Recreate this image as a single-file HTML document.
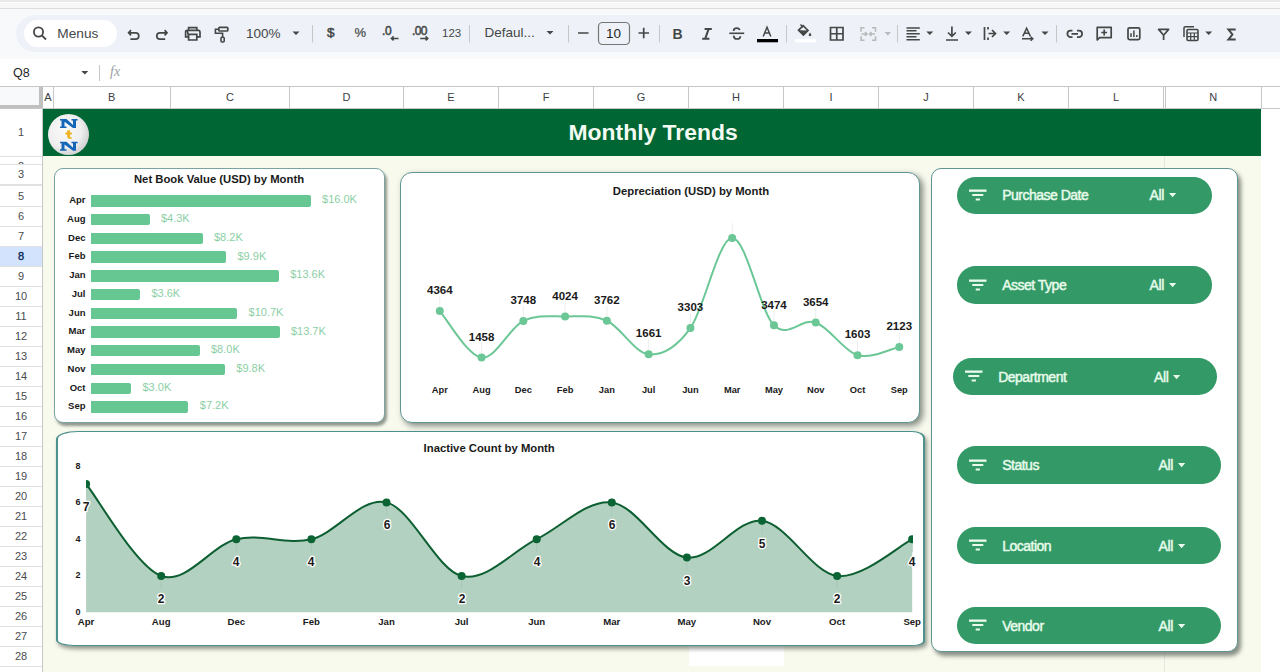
<!DOCTYPE html>
<html><head><meta charset="utf-8"><style>
html,body{margin:0;padding:0;width:1280px;height:672px;overflow:hidden;background:#fff;font-family:"Liberation Sans", sans-serif;}
div{box-sizing:border-box}
</style></head><body>
<div style="position:absolute;left:0px;top:0px;width:1280px;height:2px;background:#e9eae8"></div><div style="position:absolute;left:0px;top:2px;width:1280px;height:1px;background:#fff"></div><div style="position:absolute;left:0px;top:3px;width:1280px;height:5px;background:#f8f7f7"></div><div style="position:absolute;left:0px;top:8px;width:1280px;height:1px;background:#dfdcdc"></div><div style="position:absolute;left:0px;top:9px;width:1280px;height:50px;background:#f7f9fb"></div><div style="position:absolute;left:16px;top:15px;width:1290px;height:37px;border-radius:19px;background:#eef2f8"></div><div style="position:absolute;left:24px;top:20px;width:93px;height:27px;border-radius:14px;background:#fff"></div><div style="position:absolute;left:57.3px;top:25.8px;white-space:nowrap;font-size:13.7px;color:#444746;line-height:15px">Menus</div>
<svg style="position:absolute;left:0;top:0;z-index:5" width="1280" height="90" fill="none" stroke="#444746" stroke-width="1.8">
 <!-- search -->
 <circle cx="38.5" cy="32" r="4.6"/><path d="M41.8 35.3 L46 39.5"/>
 <!-- undo -->
 <path d="M131 30.2 L128.6 32.8 L131 35.4 M128.6 32.8 H135.6 A3.2 3.2 0 0 1 135.6 39.2 H130.4" stroke-width="1.7"/>
 <!-- redo -->
 <path d="M164.6 30.2 L167 32.8 L164.6 35.4 M167 32.8 H160 A3.2 3.2 0 0 0 160 39.2 H165.2" stroke-width="1.7"/>
 <!-- print -->
 <path d="M188.6 30.3 V27.6 H196.8 V30.3 M187.3 30.3 H198.4 A1.6 1.6 0 0 1 200 31.9 V36.8 H196.8 M188.6 36.8 H185.6 V31.9 A1.6 1.6 0 0 1 187.3 30.3 Z M188.6 34.4 H196.8 V40 H188.6 Z" stroke-width="1.7"/>
 <!-- paint format -->
 <rect x="218.8" y="27.4" width="9" height="3.6" rx="0.8" stroke-width="1.7"/><path d="M218.8 29.2 H215.4 V33.3 H222.6 V37" stroke-width="1.6"/><rect x="221" y="37.2" width="3.2" height="4.8" rx="1" stroke-width="1.6"/>
 <!-- dropdown triangles -->
 <path d="M292.5 31.5 H299.5 L296 35 Z M546.5 31 H553.5 L550 34.5 Z M81.3 71 H88.3 L84.8 74.5 Z" fill="#444746" stroke="none"/>
 <!-- separators -->
 <path d="M312.5 25 V42.5 M469.5 25 V42.5 M568.5 25 V42.5 M659.5 25 V42.5 M786.5 25 V42.5 M897.5 25 V42.5 M1056.5 25 V42.5" stroke="#c7c7c7" stroke-width="1"/>
 <path d="M398.6 38.4 H391.6 M393.6 36.4 L391.4 38.4 L393.6 40.4 M420.2 38.4 H427.6 M425.6 36.4 L427.8 38.4 L425.6 40.4" stroke-width="1.5"/>
 <!-- minus plus -->
 <path d="M578 33 H588.5 M638.5 33 H649 M643.7 27.8 V38.2" stroke-width="1.7"/>
 <rect x="598.5" y="22.5" width="31" height="22" rx="4" stroke="#747775" stroke-width="1.2"/>
 <!-- strikethrough -->
 <path d="M729.3 33.3 H744.2" stroke-width="1.6"/><path d="M733.6 31 C733.6 29.2 735 28.2 736.6 28.2 C738.2 28.2 739.4 29 739.6 30.2" stroke-width="1.7"/><path d="M733.6 35.6 C733.8 37.8 735.2 39 737 39 C739 39 740.4 37.8 740.4 36.2" stroke-width="1.7"/>
 <!-- text color A -->
 <path d="M763.2 36.5 L767 27.3 L770.8 36.5 M764.6 33 H769.4" stroke-width="1.5"/>
 <rect x="757" y="39" width="21" height="3.3" fill="#000" stroke="none"/>
 <!-- paint bucket -->
 <path d="M798.6 30.2 L803.2 25.6 L808 30.4 L803.4 35 Z" stroke-width="1.7"/><path d="M798.6 30.2 L808 30.4 L803.4 35 Z" fill="#444746" stroke="none"/><path d="M800.5 24.5 L803.2 27.2" stroke-width="1.5"/><path d="M810 32.6 Q808.2 35 809 35.8 Q810 36.6 811 35.8 Q811.8 35 810 32.6Z" fill="#444746" stroke="none"/>
 <rect x="795" y="39" width="21" height="3.3" fill="#fff" stroke="none"/>
 <!-- borders -->
 <path d="M830.5 27.5 H843 V40 H830.5 Z M836.75 27.5 V40 M830.5 33.75 H843" stroke-width="1.7"/>
 <!-- merge (gray) -->
 <path d="M864.5 27.8 H861 V31.8 M861 36.2 V40.2 H864.5 M872 27.8 H875.5 V31.8 M875.5 36.2 V40.2 H872 M861.5 34 H866.8 M865 32.2 L866.9 34 L865 35.8 M875 34 H869.7 M871.5 32.2 L869.6 34 L871.5 35.8" stroke="#b8b9b9" stroke-width="1.6"/>
 <path d="M884.5 32 H891 L887.75 35.5 Z" fill="#b8b9b9" stroke="none"/>
 <!-- align left -->
 <path d="M906.5 27.9 H919.8 M906.5 30.85 H916.5 M906.5 33.8 H919.8 M906.5 36.75 H916.5 M906.5 39.7 H919.8" stroke-width="1.5"/>
 <!-- valign -->
 <path d="M951.9 26.5 V36 M948 32.5 L951.9 36.3 L955.8 32.5 M946 40 H958" stroke-width="1.7"/>
 <!-- wrap -->
 <path d="M984.5 27 V40 M988.5 33.5 H995 M992 30 L995.5 33.5 L992 37 M988 27 V29.5 M988 37.5 V40" stroke-width="1.7"/>
 <!-- rotate A -->
 <path d="M1022.8 36.4 L1026.6 28.2 L1030.4 36.4 M1024.2 33.2 H1029 M1022 38.8 H1032.8 M1030.6 36.8 L1032.8 38.8 L1030.6 40.8" stroke-width="1.5"/>
 <path d="M926.3 31.5 H933.3 L929.8 35 Z M964.9 31.5 H971.9 L968.4 35 Z M1003.2 31.5 H1010.2 L1006.7 35 Z M1041.5 31.5 H1048.5 L1045 35 Z M1205.2 31.5 H1212.2 L1208.7 35 Z" fill="#444746" stroke="none"/>
 <!-- link -->
 <path d="M1072.5 30.7 H1070.6 A3.2 3.2 0 0 0 1070.6 37.1 H1072.5 M1077 30.7 H1078.9 A3.2 3.2 0 0 1 1078.9 37.1 H1077 M1071.5 33.9 H1078" stroke-width="1.8"/>
 <!-- comment -->
 <path d="M1097.2 27.4 H1111.2 V37.6 H1099.6 L1097.2 40 Z M1104.2 29.6 V35.4 M1101.3 32.5 H1107.1" stroke-width="1.7" stroke-linejoin="round"/>
 <!-- chart -->
 <rect x="1128" y="27.8" width="11.8" height="11.8" rx="1.5" stroke-width="1.7"/><path d="M1131 33.2 V37 M1133.9 30.6 V37 M1136.8 35 V37" stroke-width="1.5"/>
 <!-- filter -->
 <path d="M1158.6 29.4 H1168.6 L1163.6 35.2 Z M1163.6 35 V40" stroke-width="1.7" stroke-linejoin="round"/>
 <!-- functions table -->
 <path d="M1184 37 V28 A1.3 1.3 0 0 1 1185.3 26.7 H1194" stroke-width="1.5"/>
 <rect x="1187" y="29.5" width="11" height="11" rx="1.2" stroke-width="1.6"/>
 <path d="M1187 33 H1198 M1187 36.7 H1198 M1190.7 33 V40.5 M1194.3 33 V40.5" stroke-width="1.2"/>
 <!-- sigma -->
 <path d="M1235.7 29.4 H1228.4 L1232.4 34.5 L1228.4 39.6 H1235.7" stroke-width="2"/>
 <path d="M704.6 29.1 H711.8 M702.2 38.7 H709.4 M708.6 29.1 L705.2 38.7" stroke-width="2"/>
</svg>
<div style="position:absolute;left:246px;top:26px;white-space:nowrap;font-size:13.5px;color:#444746;line-height:15px">100%</div><div style="position:absolute;left:327px;top:25.3px;white-space:nowrap;font-size:13.5px;color:#444746;line-height:15px;-webkit-text-stroke:0.5px #444746">$</div><div style="position:absolute;left:354.6px;top:25.3px;white-space:nowrap;font-size:13px;color:#444746;line-height:15px;-webkit-text-stroke:0.2px #444746">%</div><div style="position:absolute;left:382px;top:23.5px;white-space:nowrap;font-size:12px;color:#444746;line-height:14px;letter-spacing:-0.4px;-webkit-text-stroke:0.5px #444746">.0</div><div style="position:absolute;left:412px;top:23.5px;white-space:nowrap;font-size:12px;color:#444746;line-height:14px;letter-spacing:-0.6px;-webkit-text-stroke:0.5px #444746">.00</div><div style="position:absolute;left:442px;top:27px;white-space:nowrap;font-size:11.5px;color:#444746;line-height:13px">123</div><div style="position:absolute;left:484.5px;top:25px;white-space:nowrap;font-size:13.5px;color:#444746;line-height:15px">Defaul...</div><div style="position:absolute;left:606px;top:26px;white-space:nowrap;font-size:13.5px;color:#1f1f1f;line-height:15px">10</div><div style="position:absolute;left:672.5px;top:26.5px;white-space:nowrap;font-size:14px;font-weight:bold;color:#444746;line-height:15px">B</div><div style="position:absolute;left:0px;top:59px;width:1280px;height:27px;background:#fff"></div><div style="position:absolute;left:13px;top:66.3px;white-space:nowrap;font-size:12.5px;color:#1f1f1f;line-height:14px">Q8</div><div style="position:absolute;left:99px;top:65px;width:1px;height:16px;background:#c7c7c7"></div><div style="position:absolute;left:110px;top:64px;white-space:nowrap;font-size:14px;color:#9aa0a6;font-family:'Liberation Serif',serif;line-height:16px"><i>fx</i></div><div style="position:absolute;left:0px;top:86px;width:1280px;height:1px;background:#c7c7c7"></div><div style="position:absolute;left:0px;top:87px;width:1280px;height:21px;background:#fff"></div><div style="position:absolute;left:0px;top:87px;width:39px;height:18px;background:#f8f9fa"></div><div style="position:absolute;left:39px;top:87px;width:4px;height:22px;background:#c0c0c0"></div><div style="position:absolute;left:0px;top:105px;width:43px;height:4px;background:#c0c0c0"></div><div style="position:absolute;left:43px;top:87px;width:10px;height:21px;line-height:21px;text-align:center;font-size:11px;color:#3c4043">A</div><div style="position:absolute;left:52.5px;top:87px;width:1px;height:21px;background:#c7c7c7"></div><div style="position:absolute;left:53px;top:87px;width:117.5px;height:21px;line-height:21px;text-align:center;font-size:11px;color:#3c4043">B</div><div style="position:absolute;left:170.0px;top:87px;width:1px;height:21px;background:#c7c7c7"></div><div style="position:absolute;left:170.5px;top:87px;width:119.0px;height:21px;line-height:21px;text-align:center;font-size:11px;color:#3c4043">C</div><div style="position:absolute;left:289.0px;top:87px;width:1px;height:21px;background:#c7c7c7"></div><div style="position:absolute;left:289.5px;top:87px;width:114.0px;height:21px;line-height:21px;text-align:center;font-size:11px;color:#3c4043">D</div><div style="position:absolute;left:403.0px;top:87px;width:1px;height:21px;background:#c7c7c7"></div><div style="position:absolute;left:403.5px;top:87px;width:95.0px;height:21px;line-height:21px;text-align:center;font-size:11px;color:#3c4043">E</div><div style="position:absolute;left:498.0px;top:87px;width:1px;height:21px;background:#c7c7c7"></div><div style="position:absolute;left:498.5px;top:87px;width:95.0px;height:21px;line-height:21px;text-align:center;font-size:11px;color:#3c4043">F</div><div style="position:absolute;left:593.0px;top:87px;width:1px;height:21px;background:#c7c7c7"></div><div style="position:absolute;left:593.5px;top:87px;width:95.0px;height:21px;line-height:21px;text-align:center;font-size:11px;color:#3c4043">G</div><div style="position:absolute;left:688.0px;top:87px;width:1px;height:21px;background:#c7c7c7"></div><div style="position:absolute;left:688.5px;top:87px;width:95.0px;height:21px;line-height:21px;text-align:center;font-size:11px;color:#3c4043">H</div><div style="position:absolute;left:783.0px;top:87px;width:1px;height:21px;background:#c7c7c7"></div><div style="position:absolute;left:783.5px;top:87px;width:95.0px;height:21px;line-height:21px;text-align:center;font-size:11px;color:#3c4043">I</div><div style="position:absolute;left:878.0px;top:87px;width:1px;height:21px;background:#c7c7c7"></div><div style="position:absolute;left:878.5px;top:87px;width:95.0px;height:21px;line-height:21px;text-align:center;font-size:11px;color:#3c4043">J</div><div style="position:absolute;left:973.0px;top:87px;width:1px;height:21px;background:#c7c7c7"></div><div style="position:absolute;left:973.5px;top:87px;width:95.0px;height:21px;line-height:21px;text-align:center;font-size:11px;color:#3c4043">K</div><div style="position:absolute;left:1068.0px;top:87px;width:1px;height:21px;background:#c7c7c7"></div><div style="position:absolute;left:1068.5px;top:87px;width:95.0px;height:21px;line-height:21px;text-align:center;font-size:11px;color:#3c4043">L</div><div style="position:absolute;left:1163.0px;top:87px;width:1px;height:21px;background:#c7c7c7"></div><div style="position:absolute;left:1165.5px;top:87px;width:95.5px;height:21px;line-height:21px;text-align:center;font-size:11px;color:#3c4043">N</div><div style="position:absolute;left:1260.5px;top:87px;width:1px;height:21px;background:#c7c7c7"></div><div style="position:absolute;left:1165px;top:87px;width:1px;height:21px;background:#c7c7c7"></div><div style="position:absolute;left:0px;top:108px;width:1280px;height:1px;background:#c7c7c7"></div><div style="position:absolute;left:0px;top:109px;width:43px;height:563px;background:#fff"></div><div style="position:absolute;left:42px;top:109px;width:1px;height:563px;background:#c7c7c7"></div><div style="position:absolute;left:0;top:109px;width:42px;height:47px;overflow:hidden;background:#fff;line-height:47px;text-align:center;font-size:11px;color:#4a4d50;font-weight:normal">1</div><div style="position:absolute;left:0;top:156px;width:42px;height:8px;overflow:hidden;background:#fff;line-height:20px;text-align:center;font-size:11px;color:#4a4d50;font-weight:normal">2</div><div style="position:absolute;left:0;top:164px;width:42px;height:20.5px;overflow:hidden;background:#fff;line-height:20.5px;text-align:center;font-size:11px;color:#4a4d50;font-weight:normal">3</div><div style="position:absolute;left:0;top:186px;width:42px;height:20px;overflow:hidden;background:#fff;line-height:20px;text-align:center;font-size:11px;color:#4a4d50;font-weight:normal">5</div><div style="position:absolute;left:0;top:206px;width:42px;height:20px;overflow:hidden;background:#fff;line-height:20px;text-align:center;font-size:11px;color:#4a4d50;font-weight:normal">6</div><div style="position:absolute;left:0;top:226px;width:42px;height:20px;overflow:hidden;background:#fff;line-height:20px;text-align:center;font-size:11px;color:#4a4d50;font-weight:normal">7</div><div style="position:absolute;left:0;top:246px;width:42px;height:20px;overflow:hidden;background:#d3e3fd;line-height:20px;text-align:center;font-size:11px;color:#0e2c5c;font-weight:normal;-webkit-text-stroke:0.4px #0e2c5c">8</div><div style="position:absolute;left:0;top:266px;width:42px;height:20px;overflow:hidden;background:#fff;line-height:20px;text-align:center;font-size:11px;color:#4a4d50;font-weight:normal">9</div><div style="position:absolute;left:0;top:286px;width:42px;height:20px;overflow:hidden;background:#fff;line-height:20px;text-align:center;font-size:11px;color:#4a4d50;font-weight:normal">10</div><div style="position:absolute;left:0;top:306px;width:42px;height:20px;overflow:hidden;background:#fff;line-height:20px;text-align:center;font-size:11px;color:#4a4d50;font-weight:normal">11</div><div style="position:absolute;left:0;top:326px;width:42px;height:20px;overflow:hidden;background:#fff;line-height:20px;text-align:center;font-size:11px;color:#4a4d50;font-weight:normal">12</div><div style="position:absolute;left:0;top:346px;width:42px;height:20px;overflow:hidden;background:#fff;line-height:20px;text-align:center;font-size:11px;color:#4a4d50;font-weight:normal">13</div><div style="position:absolute;left:0;top:366px;width:42px;height:20px;overflow:hidden;background:#fff;line-height:20px;text-align:center;font-size:11px;color:#4a4d50;font-weight:normal">14</div><div style="position:absolute;left:0;top:386px;width:42px;height:20px;overflow:hidden;background:#fff;line-height:20px;text-align:center;font-size:11px;color:#4a4d50;font-weight:normal">15</div><div style="position:absolute;left:0;top:406px;width:42px;height:20px;overflow:hidden;background:#fff;line-height:20px;text-align:center;font-size:11px;color:#4a4d50;font-weight:normal">16</div><div style="position:absolute;left:0;top:426px;width:42px;height:20px;overflow:hidden;background:#fff;line-height:20px;text-align:center;font-size:11px;color:#4a4d50;font-weight:normal">17</div><div style="position:absolute;left:0;top:446px;width:42px;height:20px;overflow:hidden;background:#fff;line-height:20px;text-align:center;font-size:11px;color:#4a4d50;font-weight:normal">18</div><div style="position:absolute;left:0;top:466px;width:42px;height:20px;overflow:hidden;background:#fff;line-height:20px;text-align:center;font-size:11px;color:#4a4d50;font-weight:normal">19</div><div style="position:absolute;left:0;top:486px;width:42px;height:20px;overflow:hidden;background:#fff;line-height:20px;text-align:center;font-size:11px;color:#4a4d50;font-weight:normal">20</div><div style="position:absolute;left:0;top:506px;width:42px;height:20px;overflow:hidden;background:#fff;line-height:20px;text-align:center;font-size:11px;color:#4a4d50;font-weight:normal">21</div><div style="position:absolute;left:0;top:526px;width:42px;height:20px;overflow:hidden;background:#fff;line-height:20px;text-align:center;font-size:11px;color:#4a4d50;font-weight:normal">22</div><div style="position:absolute;left:0;top:546px;width:42px;height:20px;overflow:hidden;background:#fff;line-height:20px;text-align:center;font-size:11px;color:#4a4d50;font-weight:normal">23</div><div style="position:absolute;left:0;top:566px;width:42px;height:20px;overflow:hidden;background:#fff;line-height:20px;text-align:center;font-size:11px;color:#4a4d50;font-weight:normal">24</div><div style="position:absolute;left:0;top:586px;width:42px;height:20px;overflow:hidden;background:#fff;line-height:20px;text-align:center;font-size:11px;color:#4a4d50;font-weight:normal">25</div><div style="position:absolute;left:0;top:606px;width:42px;height:20px;overflow:hidden;background:#fff;line-height:20px;text-align:center;font-size:11px;color:#4a4d50;font-weight:normal">26</div><div style="position:absolute;left:0;top:626px;width:42px;height:20px;overflow:hidden;background:#fff;line-height:20px;text-align:center;font-size:11px;color:#4a4d50;font-weight:normal">27</div><div style="position:absolute;left:0;top:646px;width:42px;height:20px;overflow:hidden;background:#fff;line-height:20px;text-align:center;font-size:11px;color:#4a4d50;font-weight:normal">28</div><div style="position:absolute;left:0;top:666px;width:42px;height:20px;overflow:hidden;background:#fff;line-height:20px;text-align:center;font-size:11px;color:#4a4d50;font-weight:normal">29</div><div style="position:absolute;left:0px;top:155.5px;width:42px;height:1px;background:#e1e1e1"></div><div style="position:absolute;left:0px;top:163.5px;width:42px;height:1px;background:#e1e1e1"></div><div style="position:absolute;left:0px;top:184.0px;width:42px;height:1px;background:#e1e1e1"></div><div style="position:absolute;left:0px;top:205.5px;width:42px;height:1px;background:#e1e1e1"></div><div style="position:absolute;left:0px;top:225.5px;width:42px;height:1px;background:#e1e1e1"></div><div style="position:absolute;left:0px;top:245.5px;width:42px;height:1px;background:#e1e1e1"></div><div style="position:absolute;left:0px;top:265.5px;width:42px;height:1px;background:#e1e1e1"></div><div style="position:absolute;left:0px;top:285.5px;width:42px;height:1px;background:#e1e1e1"></div><div style="position:absolute;left:0px;top:305.5px;width:42px;height:1px;background:#e1e1e1"></div><div style="position:absolute;left:0px;top:325.5px;width:42px;height:1px;background:#e1e1e1"></div><div style="position:absolute;left:0px;top:345.5px;width:42px;height:1px;background:#e1e1e1"></div><div style="position:absolute;left:0px;top:365.5px;width:42px;height:1px;background:#e1e1e1"></div><div style="position:absolute;left:0px;top:385.5px;width:42px;height:1px;background:#e1e1e1"></div><div style="position:absolute;left:0px;top:405.5px;width:42px;height:1px;background:#e1e1e1"></div><div style="position:absolute;left:0px;top:425.5px;width:42px;height:1px;background:#e1e1e1"></div><div style="position:absolute;left:0px;top:445.5px;width:42px;height:1px;background:#e1e1e1"></div><div style="position:absolute;left:0px;top:465.5px;width:42px;height:1px;background:#e1e1e1"></div><div style="position:absolute;left:0px;top:485.5px;width:42px;height:1px;background:#e1e1e1"></div><div style="position:absolute;left:0px;top:505.5px;width:42px;height:1px;background:#e1e1e1"></div><div style="position:absolute;left:0px;top:525.5px;width:42px;height:1px;background:#e1e1e1"></div><div style="position:absolute;left:0px;top:545.5px;width:42px;height:1px;background:#e1e1e1"></div><div style="position:absolute;left:0px;top:565.5px;width:42px;height:1px;background:#e1e1e1"></div><div style="position:absolute;left:0px;top:585.5px;width:42px;height:1px;background:#e1e1e1"></div><div style="position:absolute;left:0px;top:605.5px;width:42px;height:1px;background:#e1e1e1"></div><div style="position:absolute;left:0px;top:625.5px;width:42px;height:1px;background:#e1e1e1"></div><div style="position:absolute;left:0px;top:645.5px;width:42px;height:1px;background:#e1e1e1"></div><div style="position:absolute;left:0px;top:665.5px;width:42px;height:1px;background:#e1e1e1"></div><div style="position:absolute;left:0px;top:685.5px;width:42px;height:1px;background:#e1e1e1"></div><div style="position:absolute;left:0px;top:184.5px;width:42px;height:1.5px;background:#e1e1e1"></div><div style="position:absolute;left:43px;top:109px;width:1218px;height:563px;background:#f8faee"></div><div style="position:absolute;left:1261px;top:109px;width:19px;height:563px;background:#fff"></div><div style="position:absolute;left:43px;top:109px;width:1218px;height:47px;background:#006633"></div><div style="position:absolute;left:688.5px;top:646px;width:95px;height:20px;background:#fff"></div><div style="position:absolute;left:1163.5px;top:156px;width:1px;height:563px;background:#e6e8df"></div><svg style="position:absolute;left:47px;top:113px" width="44" height="44">
<defs><radialGradient id="lg" cx="40%" cy="40%" r="60%"><stop offset="0" stop-color="#fafafa"/><stop offset="0.7" stop-color="#eeeeee"/><stop offset="1" stop-color="#d5d5d5"/></radialGradient></defs>
<circle cx="21.5" cy="21.5" r="20.5" fill="url(#lg)"/>
<path d="M13.00 6.00 L19.50 6.00 L26.00 12.00 L26.00 7.50 L24.50 7.50 L24.50 6.00 L30.60 6.00 L30.60 7.50 L29.00 7.50 L29.00 15.00 L26.00 15.00 L17.50 8.80 L17.50 13.50 L19.50 13.50 L19.50 15.00 L13.00 15.00 L13.00 13.50 L14.50 13.50 L14.50 7.50 L13.00 7.50 Z" fill="#1565b8"/><path d="M13.00 28.80 L19.50 28.80 L26.00 34.80 L26.00 30.30 L24.50 30.30 L24.50 28.80 L30.60 28.80 L30.60 30.30 L29.00 30.30 L29.00 37.80 L26.00 37.80 L17.50 31.60 L17.50 36.30 L19.50 36.30 L19.50 37.80 L13.00 37.80 L13.00 36.30 L14.50 36.30 L14.50 30.30 L13.00 30.30 Z" fill="#1565b8"/>
<path d="M20.2 17.6 L22.9 16.9 V19.6 H24.9 V21.4 H22.9 V23.4 Q22.9 24.2 23.7 24.2 H24.8 V25.4 Q23.6 25.8 22.4 25.8 Q20.2 25.8 20.2 23.6 V21.4 H18.4 V19.6 H20.2 Z" fill="#efb21f"/>
</svg><div style="position:absolute;left:568.5px;top:119.4px;white-space:nowrap;font-size:22.9px;font-weight:bold;color:#f4fbf2;line-height:26px">Monthly Trends</div><div style="position:absolute;left:53.6px;top:167.6px;width:331px;height:255.4px;background:#fff;border:1.6px solid #7aa3a1;border-radius:9px;box-shadow:2px 3px 3px rgba(60,70,60,0.55);box-sizing:border-box"></div><div style="position:absolute;left:54px;top:172.6px;width:330px;text-align:center;font-size:11.3px;font-weight:bold;color:#1a1a1a;line-height:13px">Net Book Value (USD) by Month</div><div style="position:absolute;left:91px;top:195.3px;width:219.7px;height:11.3px;background:#66c793;border-radius:0 2px 2px 0"></div><div style="position:absolute;left:45px;top:193.20px;width:40.5px;text-align:right;font-size:9.5px;font-weight:bold;color:#1a1a1a;line-height:13px">Apr</div><div style="position:absolute;left:322.1px;top:192.4px;white-space:nowrap;font-size:11px;color:#8ccfa5;line-height:15px">$16.0K</div><div style="position:absolute;left:91px;top:214.03px;width:58.5px;height:11.3px;background:#66c793;border-radius:0 2px 2px 0"></div><div style="position:absolute;left:45px;top:211.93px;width:40.5px;text-align:right;font-size:9.5px;font-weight:bold;color:#1a1a1a;line-height:13px">Aug</div><div style="position:absolute;left:160.9px;top:211.13px;white-space:nowrap;font-size:11px;color:#8ccfa5;line-height:15px">$4.3K</div><div style="position:absolute;left:91px;top:232.76px;width:111.6px;height:11.3px;background:#66c793;border-radius:0 2px 2px 0"></div><div style="position:absolute;left:45px;top:230.66px;width:40.5px;text-align:right;font-size:9.5px;font-weight:bold;color:#1a1a1a;line-height:13px">Dec</div><div style="position:absolute;left:214.0px;top:229.86px;white-space:nowrap;font-size:11px;color:#8ccfa5;line-height:15px">$8.2K</div><div style="position:absolute;left:91px;top:251.49px;width:135.1px;height:11.3px;background:#66c793;border-radius:0 2px 2px 0"></div><div style="position:absolute;left:45px;top:249.39px;width:40.5px;text-align:right;font-size:9.5px;font-weight:bold;color:#1a1a1a;line-height:13px">Feb</div><div style="position:absolute;left:237.5px;top:248.59px;white-space:nowrap;font-size:11px;color:#8ccfa5;line-height:15px">$9.9K</div><div style="position:absolute;left:91px;top:270.22px;width:187.8px;height:11.3px;background:#66c793;border-radius:0 2px 2px 0"></div><div style="position:absolute;left:45px;top:268.12px;width:40.5px;text-align:right;font-size:9.5px;font-weight:bold;color:#1a1a1a;line-height:13px">Jan</div><div style="position:absolute;left:290.2px;top:267.32px;white-space:nowrap;font-size:11px;color:#8ccfa5;line-height:15px">$13.6K</div><div style="position:absolute;left:91px;top:288.95px;width:49.0px;height:11.3px;background:#66c793;border-radius:0 2px 2px 0"></div><div style="position:absolute;left:45px;top:286.85px;width:40.5px;text-align:right;font-size:9.5px;font-weight:bold;color:#1a1a1a;line-height:13px">Jul</div><div style="position:absolute;left:151.4px;top:286.05px;white-space:nowrap;font-size:11px;color:#8ccfa5;line-height:15px">$3.6K</div><div style="position:absolute;left:91px;top:307.68px;width:146.2px;height:11.3px;background:#66c793;border-radius:0 2px 2px 0"></div><div style="position:absolute;left:45px;top:305.58px;width:40.5px;text-align:right;font-size:9.5px;font-weight:bold;color:#1a1a1a;line-height:13px">Jun</div><div style="position:absolute;left:248.6px;top:304.78px;white-space:nowrap;font-size:11px;color:#8ccfa5;line-height:15px">$10.7K</div><div style="position:absolute;left:91px;top:326.41px;width:188.5px;height:11.3px;background:#66c793;border-radius:0 2px 2px 0"></div><div style="position:absolute;left:45px;top:324.31px;width:40.5px;text-align:right;font-size:9.5px;font-weight:bold;color:#1a1a1a;line-height:13px">Mar</div><div style="position:absolute;left:290.9px;top:323.51px;white-space:nowrap;font-size:11px;color:#8ccfa5;line-height:15px">$13.7K</div><div style="position:absolute;left:91px;top:345.14px;width:108.6px;height:11.3px;background:#66c793;border-radius:0 2px 2px 0"></div><div style="position:absolute;left:45px;top:343.04px;width:40.5px;text-align:right;font-size:9.5px;font-weight:bold;color:#1a1a1a;line-height:13px">May</div><div style="position:absolute;left:211.0px;top:342.24px;white-space:nowrap;font-size:11px;color:#8ccfa5;line-height:15px">$8.0K</div><div style="position:absolute;left:91px;top:363.87px;width:133.9px;height:11.3px;background:#66c793;border-radius:0 2px 2px 0"></div><div style="position:absolute;left:45px;top:361.77px;width:40.5px;text-align:right;font-size:9.5px;font-weight:bold;color:#1a1a1a;line-height:13px">Nov</div><div style="position:absolute;left:236.3px;top:360.97px;white-space:nowrap;font-size:11px;color:#8ccfa5;line-height:15px">$9.8K</div><div style="position:absolute;left:91px;top:382.6px;width:40.1px;height:11.3px;background:#66c793;border-radius:0 2px 2px 0"></div><div style="position:absolute;left:45px;top:380.50px;width:40.5px;text-align:right;font-size:9.5px;font-weight:bold;color:#1a1a1a;line-height:13px">Oct</div><div style="position:absolute;left:142.5px;top:379.7px;white-space:nowrap;font-size:11px;color:#8ccfa5;line-height:15px">$3.0K</div><div style="position:absolute;left:91px;top:401.33px;width:97.4px;height:11.3px;background:#66c793;border-radius:0 2px 2px 0"></div><div style="position:absolute;left:45px;top:399.23px;width:40.5px;text-align:right;font-size:9.5px;font-weight:bold;color:#1a1a1a;line-height:13px">Sep</div><div style="position:absolute;left:199.8px;top:398.43px;white-space:nowrap;font-size:11px;color:#8ccfa5;line-height:15px">$7.2K</div><div style="position:absolute;left:399.5px;top:172px;width:520.5px;height:251.2px;background:#fff;border:1.5px solid #5f9692;border-radius:12px;box-shadow:3px 3px 6px rgba(60,70,60,0.62);box-sizing:border-box"></div><div style="position:absolute;left:612.8px;top:185.3px;white-space:nowrap;font-size:11.3px;font-weight:bold;color:#1a1a1a;line-height:13px">Depreciation (USD) by Month</div><svg style="position:absolute;left:0;top:0" width="1280" height="672"><path d="M439.80,311.11 C446.76,318.84 467.65,355.88 481.57,357.52 C495.49,359.16 509.42,327.77 523.34,320.94 C537.26,314.11 551.19,316.57 565.11,316.54 C579.03,316.50 592.96,314.43 606.88,320.72 C620.80,327.01 634.73,353.05 648.65,354.27 C662.57,355.50 676.50,347.41 690.42,328.05 C704.34,308.69 718.27,238.56 732.19,238.11 C746.11,237.65 760.04,311.26 773.96,325.32 C787.88,339.38 801.81,317.47 815.73,322.45 C829.65,327.43 843.58,351.13 857.50,355.20 C871.42,359.28 892.31,348.28 899.27,346.90" fill="none" stroke="#6cc796" stroke-width="2"/><path d="M439.80 296.11 V307.11" stroke="#ededed" stroke-width="1"/><path d="M481.57 342.52 V353.52" stroke="#ededed" stroke-width="1"/><path d="M523.34 305.94 V316.94" stroke="#ededed" stroke-width="1"/><path d="M565.11 301.54 V312.54" stroke="#ededed" stroke-width="1"/><path d="M606.88 305.72 V316.72" stroke="#ededed" stroke-width="1"/><path d="M648.65 339.27 V350.27" stroke="#ededed" stroke-width="1"/><path d="M690.42 313.05 V324.05" stroke="#ededed" stroke-width="1"/><path d="M732.19 223.11 V234.11" stroke="#ededed" stroke-width="1"/><path d="M773.96 310.32 V321.32" stroke="#ededed" stroke-width="1"/><path d="M815.73 307.45 V318.45" stroke="#ededed" stroke-width="1"/><path d="M857.50 340.20 V351.20" stroke="#ededed" stroke-width="1"/><path d="M899.27 331.90 V342.90" stroke="#ededed" stroke-width="1"/><circle cx="439.80" cy="311.11" r="4" fill="#6cc796"/><circle cx="481.57" cy="357.52" r="4" fill="#6cc796"/><circle cx="523.34" cy="320.94" r="4" fill="#6cc796"/><circle cx="565.11" cy="316.54" r="4" fill="#6cc796"/><circle cx="606.88" cy="320.72" r="4" fill="#6cc796"/><circle cx="648.65" cy="354.27" r="4" fill="#6cc796"/><circle cx="690.42" cy="328.05" r="4" fill="#6cc796"/><circle cx="732.19" cy="238.11" r="4" fill="#6cc796"/><circle cx="773.96" cy="325.32" r="4" fill="#6cc796"/><circle cx="815.73" cy="322.45" r="4" fill="#6cc796"/><circle cx="857.50" cy="355.20" r="4" fill="#6cc796"/><circle cx="899.27" cy="346.90" r="4" fill="#6cc796"/></svg><div style="position:absolute;left:414.80px;top:284.31px;width:50px;text-align:center;font-size:11.5px;font-weight:bold;color:#1a1a1a;line-height:13px">4364</div><div style="position:absolute;left:414.80px;top:385px;width:50px;text-align:center;font-size:9.3px;font-weight:bold;color:#1a1a1a;line-height:11px">Apr</div><div style="position:absolute;left:456.57px;top:330.72px;width:50px;text-align:center;font-size:11.5px;font-weight:bold;color:#1a1a1a;line-height:13px">1458</div><div style="position:absolute;left:456.57px;top:385px;width:50px;text-align:center;font-size:9.3px;font-weight:bold;color:#1a1a1a;line-height:11px">Aug</div><div style="position:absolute;left:498.34px;top:294.14px;width:50px;text-align:center;font-size:11.5px;font-weight:bold;color:#1a1a1a;line-height:13px">3748</div><div style="position:absolute;left:498.34px;top:385px;width:50px;text-align:center;font-size:9.3px;font-weight:bold;color:#1a1a1a;line-height:11px">Dec</div><div style="position:absolute;left:540.11px;top:289.74px;width:50px;text-align:center;font-size:11.5px;font-weight:bold;color:#1a1a1a;line-height:13px">4024</div><div style="position:absolute;left:540.11px;top:385px;width:50px;text-align:center;font-size:9.3px;font-weight:bold;color:#1a1a1a;line-height:11px">Feb</div><div style="position:absolute;left:581.88px;top:293.92px;width:50px;text-align:center;font-size:11.5px;font-weight:bold;color:#1a1a1a;line-height:13px">3762</div><div style="position:absolute;left:581.88px;top:385px;width:50px;text-align:center;font-size:9.3px;font-weight:bold;color:#1a1a1a;line-height:11px">Jan</div><div style="position:absolute;left:623.65px;top:327.47px;width:50px;text-align:center;font-size:11.5px;font-weight:bold;color:#1a1a1a;line-height:13px">1661</div><div style="position:absolute;left:623.65px;top:385px;width:50px;text-align:center;font-size:9.3px;font-weight:bold;color:#1a1a1a;line-height:11px">Jul</div><div style="position:absolute;left:665.42px;top:301.25px;width:50px;text-align:center;font-size:11.5px;font-weight:bold;color:#1a1a1a;line-height:13px">3303</div><div style="position:absolute;left:665.42px;top:385px;width:50px;text-align:center;font-size:9.3px;font-weight:bold;color:#1a1a1a;line-height:11px">Jun</div><div style="position:absolute;left:707.19px;top:385px;width:50px;text-align:center;font-size:9.3px;font-weight:bold;color:#1a1a1a;line-height:11px">Mar</div><div style="position:absolute;left:748.96px;top:298.52px;width:50px;text-align:center;font-size:11.5px;font-weight:bold;color:#1a1a1a;line-height:13px">3474</div><div style="position:absolute;left:748.96px;top:385px;width:50px;text-align:center;font-size:9.3px;font-weight:bold;color:#1a1a1a;line-height:11px">May</div><div style="position:absolute;left:790.73px;top:295.65px;width:50px;text-align:center;font-size:11.5px;font-weight:bold;color:#1a1a1a;line-height:13px">3654</div><div style="position:absolute;left:790.73px;top:385px;width:50px;text-align:center;font-size:9.3px;font-weight:bold;color:#1a1a1a;line-height:11px">Nov</div><div style="position:absolute;left:832.50px;top:328.40px;width:50px;text-align:center;font-size:11.5px;font-weight:bold;color:#1a1a1a;line-height:13px">1603</div><div style="position:absolute;left:832.50px;top:385px;width:50px;text-align:center;font-size:9.3px;font-weight:bold;color:#1a1a1a;line-height:11px">Oct</div><div style="position:absolute;left:874.27px;top:320.10px;width:50px;text-align:center;font-size:11.5px;font-weight:bold;color:#1a1a1a;line-height:13px">2123</div><div style="position:absolute;left:874.27px;top:385px;width:50px;text-align:center;font-size:9.3px;font-weight:bold;color:#1a1a1a;line-height:11px">Sep</div><div style="position:absolute;left:56.3px;top:430.9px;width:868.5px;height:214.8px;background:#fff;border-style:solid;border-color:#4d918c;border-width:1.6px 2.2px 1.8px 2.2px;border-radius:22px 13px 12px 18px / 8px 7px 5px 6px;box-shadow:2px 3px 4px rgba(60,70,60,0.55);box-sizing:border-box"></div><div style="position:absolute;left:423.6px;top:442px;white-space:nowrap;font-size:11.3px;font-weight:bold;color:#1a1a1a;line-height:13px">Inactive Count by Month</div><svg style="position:absolute;left:0;top:0" width="1280" height="672"><defs><clipPath id="c3"><rect x="86" y="440" width="827" height="200"/></clipPath></defs><path d="M86.10,484.00 C98.62,499.33 136.17,566.80 161.20,576.00 C186.23,585.20 211.27,545.33 236.30,539.20 C261.33,533.07 286.37,545.33 311.40,539.20 C336.43,533.07 361.47,496.27 386.50,502.40 C411.53,508.53 436.57,569.87 461.60,576.00 C486.63,582.13 511.67,551.47 536.70,539.20 C561.73,526.93 586.77,499.33 611.80,502.40 C636.83,505.47 661.87,554.53 686.90,557.60 C711.93,560.67 736.97,517.73 762.00,520.80 C787.03,523.87 812.07,572.93 837.10,576.00 C862.13,579.07 899.68,545.33 912.20,539.20 L912.20,612.3 L86.10,612.3 Z" fill="#b3d1c0"/><path d="M86.10,484.00 C98.62,499.33 136.17,566.80 161.20,576.00 C186.23,585.20 211.27,545.33 236.30,539.20 C261.33,533.07 286.37,545.33 311.40,539.20 C336.43,533.07 361.47,496.27 386.50,502.40 C411.53,508.53 436.57,569.87 461.60,576.00 C486.63,582.13 511.67,551.47 536.70,539.20 C561.73,526.93 586.77,499.33 611.80,502.40 C636.83,505.47 661.87,554.53 686.90,557.60 C711.93,560.67 736.97,517.73 762.00,520.80 C787.03,523.87 812.07,572.93 837.10,576.00 C862.13,579.07 899.68,545.33 912.20,539.20" fill="none" stroke="#0d5f32" stroke-width="2" clip-path="url(#c3)"/><path d="M86.10 488.00 V497.00" stroke="#a8c8b7" stroke-width="1" clip-path="url(#c3)"/><path d="M161.20 580.00 V589.00" stroke="#a8c8b7" stroke-width="1" clip-path="url(#c3)"/><path d="M236.30 543.20 V552.20" stroke="#a8c8b7" stroke-width="1" clip-path="url(#c3)"/><path d="M311.40 543.20 V552.20" stroke="#a8c8b7" stroke-width="1" clip-path="url(#c3)"/><path d="M386.50 506.40 V515.40" stroke="#a8c8b7" stroke-width="1" clip-path="url(#c3)"/><path d="M461.60 580.00 V589.00" stroke="#a8c8b7" stroke-width="1" clip-path="url(#c3)"/><path d="M536.70 543.20 V552.20" stroke="#a8c8b7" stroke-width="1" clip-path="url(#c3)"/><path d="M611.80 506.40 V515.40" stroke="#a8c8b7" stroke-width="1" clip-path="url(#c3)"/><path d="M686.90 561.60 V570.60" stroke="#a8c8b7" stroke-width="1" clip-path="url(#c3)"/><path d="M762.00 524.80 V533.80" stroke="#a8c8b7" stroke-width="1" clip-path="url(#c3)"/><path d="M837.10 580.00 V589.00" stroke="#a8c8b7" stroke-width="1" clip-path="url(#c3)"/><path d="M912.20 543.20 V552.20" stroke="#a8c8b7" stroke-width="1" clip-path="url(#c3)"/><circle cx="86.10" cy="484.00" r="4" fill="#0a6433" clip-path="url(#c3)"/><circle cx="161.20" cy="576.00" r="4" fill="#0a6433" clip-path="url(#c3)"/><circle cx="236.30" cy="539.20" r="4" fill="#0a6433" clip-path="url(#c3)"/><circle cx="311.40" cy="539.20" r="4" fill="#0a6433" clip-path="url(#c3)"/><circle cx="386.50" cy="502.40" r="4" fill="#0a6433" clip-path="url(#c3)"/><circle cx="461.60" cy="576.00" r="4" fill="#0a6433" clip-path="url(#c3)"/><circle cx="536.70" cy="539.20" r="4" fill="#0a6433" clip-path="url(#c3)"/><circle cx="611.80" cy="502.40" r="4" fill="#0a6433" clip-path="url(#c3)"/><circle cx="686.90" cy="557.60" r="4" fill="#0a6433" clip-path="url(#c3)"/><circle cx="762.00" cy="520.80" r="4" fill="#0a6433" clip-path="url(#c3)"/><circle cx="837.10" cy="576.00" r="4" fill="#0a6433" clip-path="url(#c3)"/><circle cx="912.20" cy="539.20" r="4" fill="#0a6433" clip-path="url(#c3)"/></svg><div style="position:absolute;left:70px;top:460.70px;width:16px;text-align:center;font-size:9px;font-weight:bold;color:#1a1a1a;line-height:10px">8</div><div style="position:absolute;left:70px;top:497.30px;width:16px;text-align:center;font-size:9px;font-weight:bold;color:#1a1a1a;line-height:10px">6</div><div style="position:absolute;left:70px;top:533.75px;width:16px;text-align:center;font-size:9px;font-weight:bold;color:#1a1a1a;line-height:10px">4</div><div style="position:absolute;left:70px;top:570.30px;width:16px;text-align:center;font-size:9px;font-weight:bold;color:#1a1a1a;line-height:10px">2</div><div style="position:absolute;left:70px;top:606.70px;width:16px;text-align:center;font-size:9px;font-weight:bold;color:#1a1a1a;line-height:10px">0</div><svg style="position:absolute;left:71.10px;top:497.00px" width="30" height="20"><text x="15" y="14.3" text-anchor="middle" font-family="Liberation Sans" font-weight="bold" font-size="12" fill="#1a1a1a" stroke="#fff" stroke-width="2.6" stroke-linejoin="round" paint-order="stroke">7</text></svg><div style="position:absolute;left:66.10px;top:615.7px;width:40px;text-align:center;font-size:9.6px;font-weight:bold;color:#1a1a1a;line-height:11px">Apr</div><svg style="position:absolute;left:146.20px;top:589.00px" width="30" height="20"><text x="15" y="14.3" text-anchor="middle" font-family="Liberation Sans" font-weight="bold" font-size="12" fill="#1a1a1a" stroke="#fff" stroke-width="2.6" stroke-linejoin="round" paint-order="stroke">2</text></svg><div style="position:absolute;left:141.20px;top:615.7px;width:40px;text-align:center;font-size:9.6px;font-weight:bold;color:#1a1a1a;line-height:11px">Aug</div><svg style="position:absolute;left:221.30px;top:552.20px" width="30" height="20"><text x="15" y="14.3" text-anchor="middle" font-family="Liberation Sans" font-weight="bold" font-size="12" fill="#1a1a1a" stroke="#fff" stroke-width="2.6" stroke-linejoin="round" paint-order="stroke">4</text></svg><div style="position:absolute;left:216.30px;top:615.7px;width:40px;text-align:center;font-size:9.6px;font-weight:bold;color:#1a1a1a;line-height:11px">Dec</div><svg style="position:absolute;left:296.40px;top:552.20px" width="30" height="20"><text x="15" y="14.3" text-anchor="middle" font-family="Liberation Sans" font-weight="bold" font-size="12" fill="#1a1a1a" stroke="#fff" stroke-width="2.6" stroke-linejoin="round" paint-order="stroke">4</text></svg><div style="position:absolute;left:291.40px;top:615.7px;width:40px;text-align:center;font-size:9.6px;font-weight:bold;color:#1a1a1a;line-height:11px">Feb</div><svg style="position:absolute;left:371.50px;top:515.40px" width="30" height="20"><text x="15" y="14.3" text-anchor="middle" font-family="Liberation Sans" font-weight="bold" font-size="12" fill="#1a1a1a" stroke="#fff" stroke-width="2.6" stroke-linejoin="round" paint-order="stroke">6</text></svg><div style="position:absolute;left:366.50px;top:615.7px;width:40px;text-align:center;font-size:9.6px;font-weight:bold;color:#1a1a1a;line-height:11px">Jan</div><svg style="position:absolute;left:446.60px;top:589.00px" width="30" height="20"><text x="15" y="14.3" text-anchor="middle" font-family="Liberation Sans" font-weight="bold" font-size="12" fill="#1a1a1a" stroke="#fff" stroke-width="2.6" stroke-linejoin="round" paint-order="stroke">2</text></svg><div style="position:absolute;left:441.60px;top:615.7px;width:40px;text-align:center;font-size:9.6px;font-weight:bold;color:#1a1a1a;line-height:11px">Jul</div><svg style="position:absolute;left:521.70px;top:552.20px" width="30" height="20"><text x="15" y="14.3" text-anchor="middle" font-family="Liberation Sans" font-weight="bold" font-size="12" fill="#1a1a1a" stroke="#fff" stroke-width="2.6" stroke-linejoin="round" paint-order="stroke">4</text></svg><div style="position:absolute;left:516.70px;top:615.7px;width:40px;text-align:center;font-size:9.6px;font-weight:bold;color:#1a1a1a;line-height:11px">Jun</div><svg style="position:absolute;left:596.80px;top:515.40px" width="30" height="20"><text x="15" y="14.3" text-anchor="middle" font-family="Liberation Sans" font-weight="bold" font-size="12" fill="#1a1a1a" stroke="#fff" stroke-width="2.6" stroke-linejoin="round" paint-order="stroke">6</text></svg><div style="position:absolute;left:591.80px;top:615.7px;width:40px;text-align:center;font-size:9.6px;font-weight:bold;color:#1a1a1a;line-height:11px">Mar</div><svg style="position:absolute;left:671.90px;top:570.60px" width="30" height="20"><text x="15" y="14.3" text-anchor="middle" font-family="Liberation Sans" font-weight="bold" font-size="12" fill="#1a1a1a" stroke="#fff" stroke-width="2.6" stroke-linejoin="round" paint-order="stroke">3</text></svg><div style="position:absolute;left:666.90px;top:615.7px;width:40px;text-align:center;font-size:9.6px;font-weight:bold;color:#1a1a1a;line-height:11px">May</div><svg style="position:absolute;left:747.00px;top:533.80px" width="30" height="20"><text x="15" y="14.3" text-anchor="middle" font-family="Liberation Sans" font-weight="bold" font-size="12" fill="#1a1a1a" stroke="#fff" stroke-width="2.6" stroke-linejoin="round" paint-order="stroke">5</text></svg><div style="position:absolute;left:742.00px;top:615.7px;width:40px;text-align:center;font-size:9.6px;font-weight:bold;color:#1a1a1a;line-height:11px">Nov</div><svg style="position:absolute;left:822.10px;top:589.00px" width="30" height="20"><text x="15" y="14.3" text-anchor="middle" font-family="Liberation Sans" font-weight="bold" font-size="12" fill="#1a1a1a" stroke="#fff" stroke-width="2.6" stroke-linejoin="round" paint-order="stroke">2</text></svg><div style="position:absolute;left:817.10px;top:615.7px;width:40px;text-align:center;font-size:9.6px;font-weight:bold;color:#1a1a1a;line-height:11px">Oct</div><svg style="position:absolute;left:897.20px;top:552.20px" width="30" height="20"><text x="15" y="14.3" text-anchor="middle" font-family="Liberation Sans" font-weight="bold" font-size="12" fill="#1a1a1a" stroke="#fff" stroke-width="2.6" stroke-linejoin="round" paint-order="stroke">4</text></svg><div style="position:absolute;left:892.20px;top:615.7px;width:40px;text-align:center;font-size:9.6px;font-weight:bold;color:#1a1a1a;line-height:11px">Sep</div><div style="position:absolute;left:931.2px;top:167.8px;width:306.8px;height:484.2px;background:#fff;border:1.5px solid #5f9692;border-radius:10px;box-shadow:3px 4px 4px rgba(60,70,60,0.6);box-sizing:border-box"></div><div style="position:absolute;left:957px;top:176.5px;width:255px;height:37.2px;background:#339966;border-radius:18.6px"></div><svg style="position:absolute;left:968.50px;top:186.60px" width="20" height="14"><rect x="0" y="2.5" width="17.5" height="2.3" fill="#eafbee"/><rect x="3.3" y="7" width="11" height="2" fill="#eafbee"/><rect x="6.7" y="11.5" width="4.2" height="2" fill="#eafbee"/></svg><div style="position:absolute;left:1002.2px;top:187.1px;white-space:nowrap;font-size:14px;color:#e8fcec;line-height:16px;letter-spacing:-0.5px;-webkit-text-stroke:0.45px #e8fcec">Purchase Date</div><div style="position:absolute;left:1149.5px;top:187.1px;white-space:nowrap;font-size:14px;color:#e8fcec;line-height:16px;letter-spacing:-0.4px;-webkit-text-stroke:0.45px #e8fcec">All</div><svg style="position:absolute;left:1168.70px;top:192.90px" width="8" height="5"><path d="M0 0 H7.2 L3.6 4.2 Z" fill="#eafbee"/></svg><div style="position:absolute;left:957px;top:266.3px;width:255px;height:37.4px;background:#339966;border-radius:18.7px"></div><svg style="position:absolute;left:968.50px;top:276.50px" width="20" height="14"><rect x="0" y="2.5" width="17.5" height="2.3" fill="#eafbee"/><rect x="3.3" y="7" width="11" height="2" fill="#eafbee"/><rect x="6.7" y="11.5" width="4.2" height="2" fill="#eafbee"/></svg><div style="position:absolute;left:1002.2px;top:277.0px;white-space:nowrap;font-size:14px;color:#e8fcec;line-height:16px;letter-spacing:-0.5px;-webkit-text-stroke:0.45px #e8fcec">Asset Type</div><div style="position:absolute;left:1149.5px;top:277.0px;white-space:nowrap;font-size:14px;color:#e8fcec;line-height:16px;letter-spacing:-0.4px;-webkit-text-stroke:0.45px #e8fcec">All</div><svg style="position:absolute;left:1168.70px;top:282.80px" width="8" height="5"><path d="M0 0 H7.2 L3.6 4.2 Z" fill="#eafbee"/></svg><div style="position:absolute;left:953px;top:358.4px;width:263.5px;height:37.0px;background:#339966;border-radius:18.5px"></div><svg style="position:absolute;left:964.50px;top:368.40px" width="20" height="14"><rect x="0" y="2.5" width="17.5" height="2.3" fill="#eafbee"/><rect x="3.3" y="7" width="11" height="2" fill="#eafbee"/><rect x="6.7" y="11.5" width="4.2" height="2" fill="#eafbee"/></svg><div style="position:absolute;left:998.2px;top:368.9px;white-space:nowrap;font-size:14px;color:#e8fcec;line-height:16px;letter-spacing:-0.5px;-webkit-text-stroke:0.45px #e8fcec">Department</div><div style="position:absolute;left:1154.0px;top:368.9px;white-space:nowrap;font-size:14px;color:#e8fcec;line-height:16px;letter-spacing:-0.4px;-webkit-text-stroke:0.45px #e8fcec">All</div><svg style="position:absolute;left:1173.20px;top:374.70px" width="8" height="5"><path d="M0 0 H7.2 L3.6 4.2 Z" fill="#eafbee"/></svg><div style="position:absolute;left:957px;top:446.3px;width:264px;height:37.4px;background:#339966;border-radius:18.7px"></div><svg style="position:absolute;left:968.50px;top:456.50px" width="20" height="14"><rect x="0" y="2.5" width="17.5" height="2.3" fill="#eafbee"/><rect x="3.3" y="7" width="11" height="2" fill="#eafbee"/><rect x="6.7" y="11.5" width="4.2" height="2" fill="#eafbee"/></svg><div style="position:absolute;left:1002.2px;top:457.0px;white-space:nowrap;font-size:14px;color:#e8fcec;line-height:16px;letter-spacing:-0.5px;-webkit-text-stroke:0.45px #e8fcec">Status</div><div style="position:absolute;left:1158.5px;top:457.0px;white-space:nowrap;font-size:14px;color:#e8fcec;line-height:16px;letter-spacing:-0.4px;-webkit-text-stroke:0.45px #e8fcec">All</div><svg style="position:absolute;left:1177.70px;top:462.80px" width="8" height="5"><path d="M0 0 H7.2 L3.6 4.2 Z" fill="#eafbee"/></svg><div style="position:absolute;left:957px;top:527.2px;width:264px;height:37.0px;background:#339966;border-radius:18.5px"></div><svg style="position:absolute;left:968.50px;top:537.20px" width="20" height="14"><rect x="0" y="2.5" width="17.5" height="2.3" fill="#eafbee"/><rect x="3.3" y="7" width="11" height="2" fill="#eafbee"/><rect x="6.7" y="11.5" width="4.2" height="2" fill="#eafbee"/></svg><div style="position:absolute;left:1002.2px;top:537.7px;white-space:nowrap;font-size:14px;color:#e8fcec;line-height:16px;letter-spacing:-0.5px;-webkit-text-stroke:0.45px #e8fcec">Location</div><div style="position:absolute;left:1158.5px;top:537.7px;white-space:nowrap;font-size:14px;color:#e8fcec;line-height:16px;letter-spacing:-0.4px;-webkit-text-stroke:0.45px #e8fcec">All</div><svg style="position:absolute;left:1177.70px;top:543.50px" width="8" height="5"><path d="M0 0 H7.2 L3.6 4.2 Z" fill="#eafbee"/></svg><div style="position:absolute;left:957px;top:607.1px;width:264px;height:37.3px;background:#339966;border-radius:18.6px"></div><svg style="position:absolute;left:968.50px;top:617.25px" width="20" height="14"><rect x="0" y="2.5" width="17.5" height="2.3" fill="#eafbee"/><rect x="3.3" y="7" width="11" height="2" fill="#eafbee"/><rect x="6.7" y="11.5" width="4.2" height="2" fill="#eafbee"/></svg><div style="position:absolute;left:1002.2px;top:617.75px;white-space:nowrap;font-size:14px;color:#e8fcec;line-height:16px;letter-spacing:-0.5px;-webkit-text-stroke:0.45px #e8fcec">Vendor</div><div style="position:absolute;left:1158.5px;top:617.75px;white-space:nowrap;font-size:14px;color:#e8fcec;line-height:16px;letter-spacing:-0.4px;-webkit-text-stroke:0.45px #e8fcec">All</div><svg style="position:absolute;left:1177.70px;top:623.55px" width="8" height="5"><path d="M0 0 H7.2 L3.6 4.2 Z" fill="#eafbee"/></svg>
</body></html>
